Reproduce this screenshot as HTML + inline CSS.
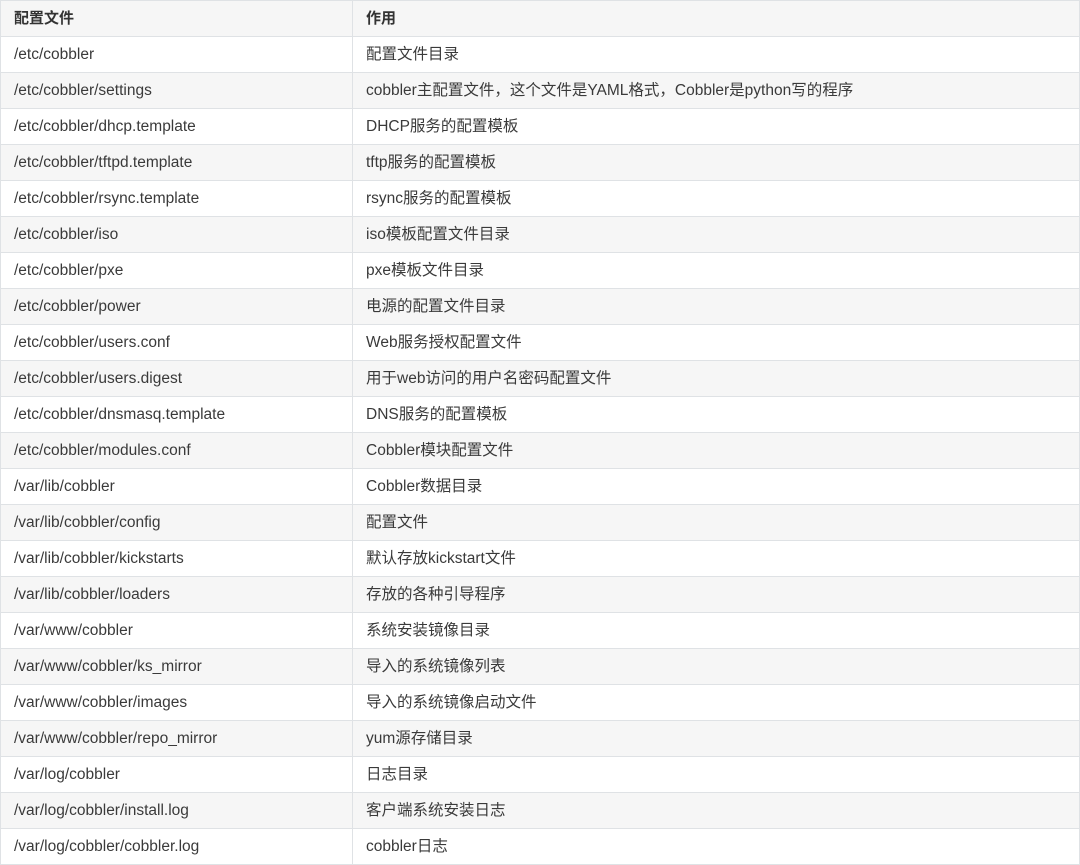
<!DOCTYPE html>
<html><head><meta charset="utf-8"><style>
html,body{margin:0;padding:0;background:#fff;}
.t{width:1080px;font-family:"Liberation Sans","Noto Sans CJK SC",sans-serif;font-size:15.5px;color:#3a3a3a;border-bottom:1px solid #dfe2e5;}
.r{display:flex;height:35px;border-top:1px solid #dfe2e5;background:#fff;}
.r.g{background:#f6f6f6;}
.r div{box-sizing:border-box;height:35px;line-height:35px;padding-left:13px;white-space:nowrap;border-left:1px solid #dfe2e5;}
.r div:first-child{width:352px;}
.r div:last-child{flex:1;border-right:1px solid #dfe2e5;}
.h{font-weight:bold;color:#333;font-size:15px;}
</style></head><body>
<div class="t">
<div class="r g h"><div>配置文件</div><div>作用</div></div>
<div class="r"><div>/etc/cobbler</div><div>配置文件目录</div></div>
<div class="r g"><div>/etc/cobbler/settings</div><div>cobbler主配置文件，这个文件是YAML格式，Cobbler是python写的程序</div></div>
<div class="r"><div>/etc/cobbler/dhcp.template</div><div>DHCP服务的配置模板</div></div>
<div class="r g"><div>/etc/cobbler/tftpd.template</div><div>tftp服务的配置模板</div></div>
<div class="r"><div>/etc/cobbler/rsync.template</div><div>rsync服务的配置模板</div></div>
<div class="r g"><div>/etc/cobbler/iso</div><div>iso模板配置文件目录</div></div>
<div class="r"><div>/etc/cobbler/pxe</div><div>pxe模板文件目录</div></div>
<div class="r g"><div>/etc/cobbler/power</div><div>电源的配置文件目录</div></div>
<div class="r"><div>/etc/cobbler/users.conf</div><div>Web服务授权配置文件</div></div>
<div class="r g"><div>/etc/cobbler/users.digest</div><div>用于web访问的用户名密码配置文件</div></div>
<div class="r"><div>/etc/cobbler/dnsmasq.template</div><div>DNS服务的配置模板</div></div>
<div class="r g"><div>/etc/cobbler/modules.conf</div><div>Cobbler模块配置文件</div></div>
<div class="r"><div>/var/lib/cobbler</div><div>Cobbler数据目录</div></div>
<div class="r g"><div>/var/lib/cobbler/config</div><div>配置文件</div></div>
<div class="r"><div>/var/lib/cobbler/kickstarts</div><div>默认存放kickstart文件</div></div>
<div class="r g"><div>/var/lib/cobbler/loaders</div><div>存放的各种引导程序</div></div>
<div class="r"><div>/var/www/cobbler</div><div>系统安装镜像目录</div></div>
<div class="r g"><div>/var/www/cobbler/ks_mirror</div><div>导入的系统镜像列表</div></div>
<div class="r"><div>/var/www/cobbler/images</div><div>导入的系统镜像启动文件</div></div>
<div class="r g"><div>/var/www/cobbler/repo_mirror</div><div>yum源存储目录</div></div>
<div class="r"><div>/var/log/cobbler</div><div>日志目录</div></div>
<div class="r g"><div>/var/log/cobbler/install.log</div><div>客户端系统安装日志</div></div>
<div class="r"><div>/var/log/cobbler/cobbler.log</div><div>cobbler日志</div></div>
</div>
</body></html>
